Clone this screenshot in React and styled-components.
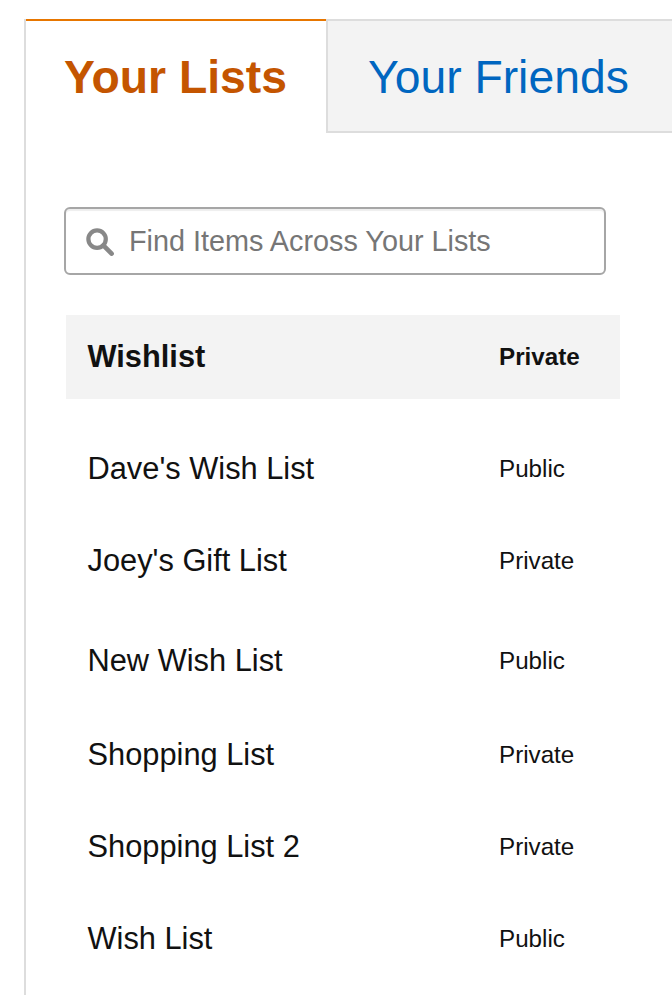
import React from "react";
import styled, { createGlobalStyle } from "styled-components";

const Global = createGlobalStyle`
  html, body { margin: 0; padding: 0; background: #fff; overflow: hidden; }
  body { font-family: "Liberation Sans", Arial, sans-serif; color: #111; }
`;

const Page = styled.div`
  width: 672px;
  height: 995px;
  overflow: hidden;
  padding: 19px 0 0 24px;
  box-sizing: border-box;
`;

const Panel = styled.div`
  border-left: 2px solid #ddd;
  height: 976px;
  box-sizing: border-box;
`;

const Tabs = styled.div`
  display: flex;
  height: 114px;
`;

const Tab = styled.div`
  box-sizing: border-box;
  height: 114px;
  display: flex;
  align-items: center;
  font-size: 46.3px;
  white-space: nowrap;
  font-weight: ${(p) => (p.$active ? 700 : 400)};
  color: ${(p) => (p.$active ? "#c45500" : "#0066c0")};
  background: ${(p) => (p.$active ? "#fff" : "#f3f3f3")};
  border-top: 2px solid ${(p) => (p.$active ? "#e77600" : "#ddd")};
  border-left: ${(p) => (p.$active ? "none" : "2px solid #ddd")};
  border-bottom: ${(p) => (p.$active ? "none" : "2px solid #ddd")};
  width: ${(p) => (p.$active ? "300px" : "346px")};
  padding-left: ${(p) => (p.$active ? "38px" : "40px")};
  padding-top: ${(p) => (p.$active ? "0" : "2px")};
`;

const Content = styled.div`
  padding: 74px 0 0 38px;
`;

const Search = styled.div`
  box-sizing: border-box;
  width: 542px;
  height: 68px;
  border: 2px solid #a6a6a6;
  border-radius: 6px;
  box-shadow: inset 0 2px 1px rgba(0, 0, 0, 0.07);
  display: flex;
  align-items: center;
  padding-left: 19px;
  gap: 15px;
  font-size: 28.8px;
  color: #767676;
`;

const List = styled.div`
  margin: 40px 0 0 2px;
  width: 554px;
`;

const Row = styled.div`
  box-sizing: border-box;
  display: grid;
  grid-template-columns: 411.5px 1fr;
  align-items: center;
  padding: 0 0 0 21.5px;
  height: ${(p) => p.$h}px;
  margin-top: ${(p) => p.$gap || 0}px;
  background: ${(p) => (p.$selected ? "#f3f3f3" : "transparent")};
  font-weight: ${(p) => (p.$selected ? 700 : 400)};
`;

const Name = styled.span`
  font-size: 30.8px;
  color: #111;
`;

const Privacy = styled.span`
  font-size: 24.2px;
  color: #111;
`;

const rows = [
  { name: "Wishlist", privacy: "Private", h: 84, selected: true },
  { name: "Dave's Wish List", privacy: "Public", h: 92, gap: 24 },
  { name: "Joey's Gift List", privacy: "Private", h: 92 },
  { name: "New Wish List", privacy: "Public", h: 92, gap: 8 },
  { name: "Shopping List", privacy: "Private", h: 92, gap: 2 },
  { name: "Shopping List 2", privacy: "Private", h: 92 },
  { name: "Wish List", privacy: "Public", h: 92 },
];

const SearchIcon = () => (
  <svg width="29" height="29" viewBox="0 0 30 30" fill="none">
    <circle cx="12.5" cy="12.5" r="9" stroke="#888" strokeWidth="4.4" />
    <path d="M19 19 L27.5 27.5" stroke="#888" strokeWidth="4.8" strokeLinecap="round" />
  </svg>
);

export default function App() {
  return (
    <Page>
      <Global />
      <Panel>
        <Tabs>
          <Tab $active>Your Lists</Tab>
          <Tab>Your Friends</Tab>
        </Tabs>
        <Content>
          <Search>
            <SearchIcon />
            Find Items Across Your Lists
          </Search>
          <List>
            {rows.map((r) => (
              <Row key={r.name} $h={r.h} $gap={r.gap} $selected={r.selected}>
                <Name>{r.name}</Name>
                <Privacy>{r.privacy}</Privacy>
              </Row>
            ))}
          </List>
        </Content>
      </Panel>
    </Page>
  );
}
